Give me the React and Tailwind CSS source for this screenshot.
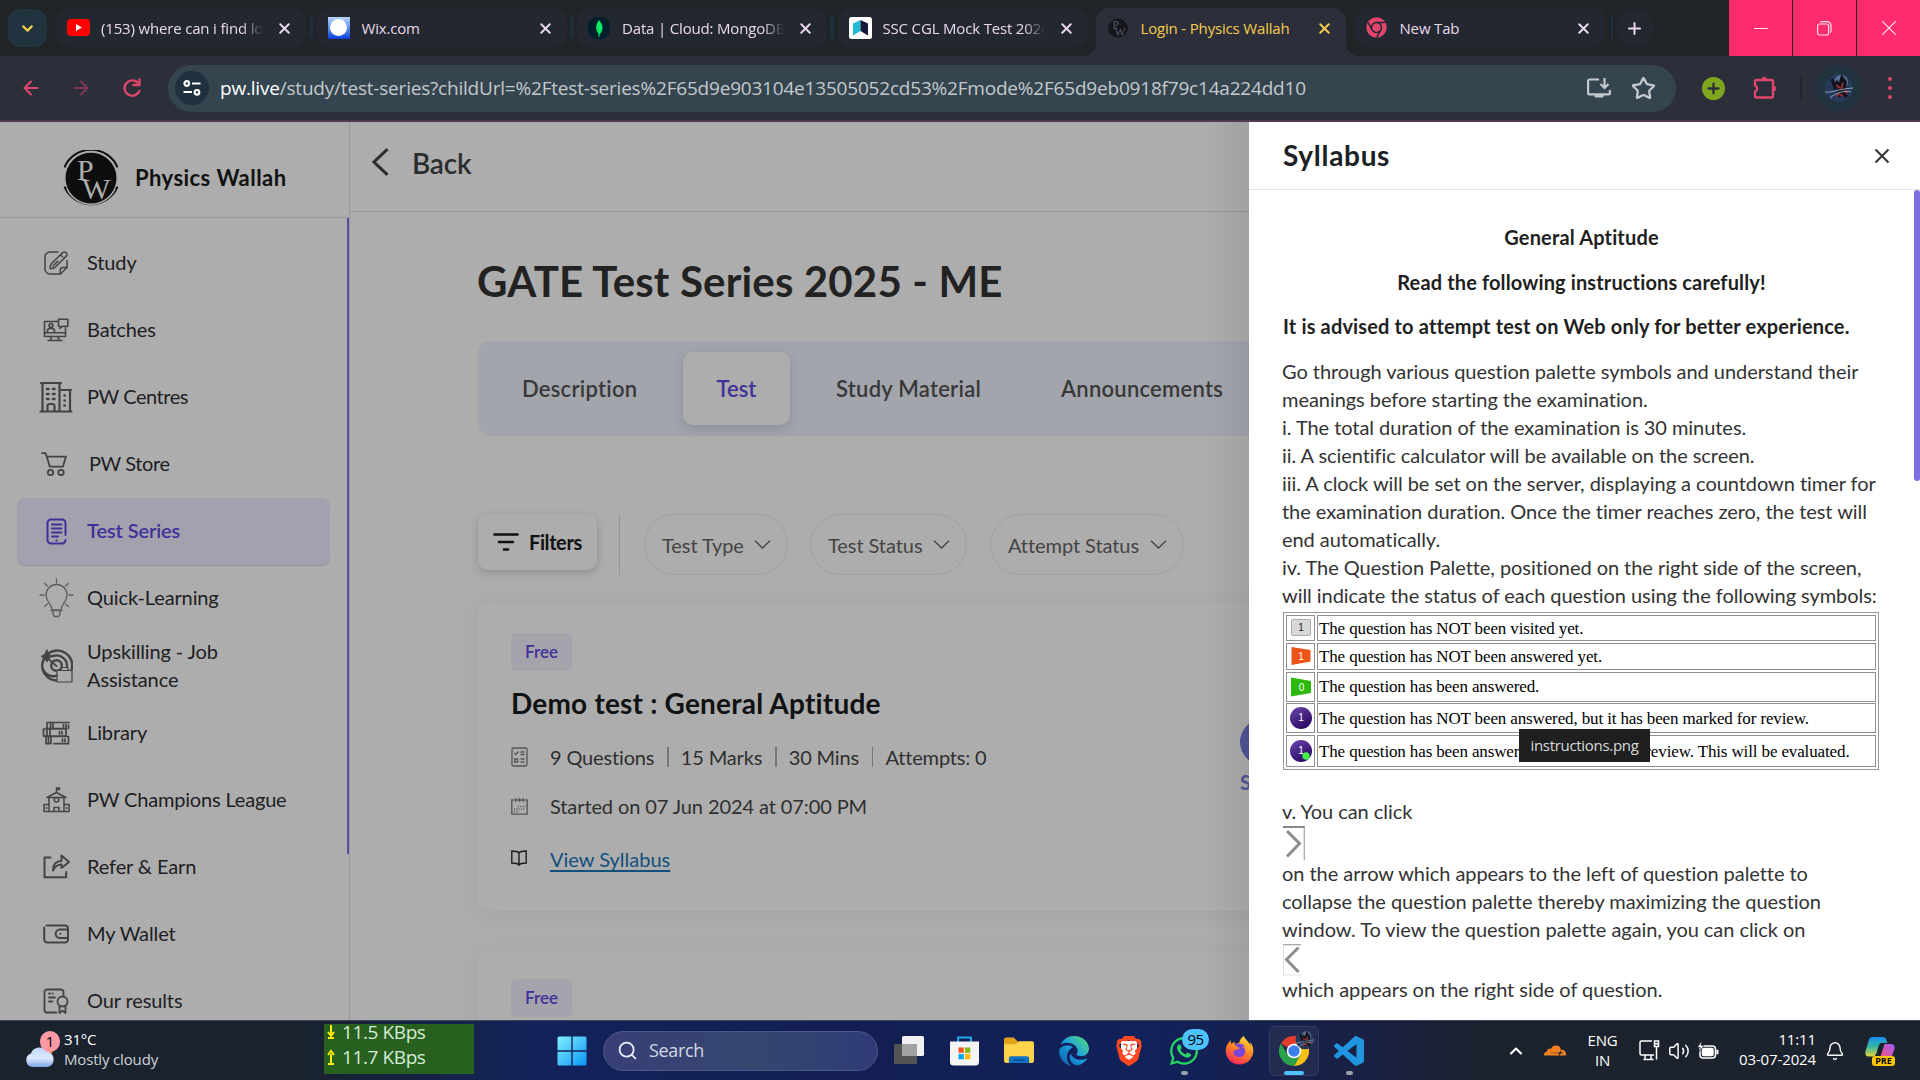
import React from 'react';
import { X, Plus, Search, Star, ArrowLeft, ArrowRight, Volume2, Bell, ChevronUp, ChevronDown } from 'lucide-react';
import { FaWhatsapp, FaFirefoxBrowser } from 'react-icons/fa';
import { FaCloudflare, FaEdge } from 'react-icons/fa6';
import { BiLogoVisualStudio } from 'react-icons/bi';
import { SiBrave } from 'react-icons/si';

/* ---------- Browser chrome ---------- */

function PwMark({ size, fg, bg }) {
  return (
    <svg width={size} height={size} viewBox="0 0 56 56" className="shrink-0">
      <circle cx="28" cy="28" r="25.5" fill={fg} />
      <path d="M1.5 17A28.5 28.5 0 0 1 54.5 17M1.5 37a28.5 28.5 0 0 0 53 0" transform="translate(0 0.8) scale(1 .97)" fill="none" stroke={fg} strokeWidth="2" />
      <path d="M4 17A26.5 26.5 0 0 1 52 17M4 39a26.5 26.5 0 0 0 48 0" fill="none" stroke={bg} strokeWidth="1.3" />
      <text x="14" y="30" fontSize="30" fill={bg} fontFamily="Liberation Serif, serif">P</text>
      <text x="19" y="49" fontSize="30" fill={bg} fontFamily="Liberation Serif, serif">W</text>
    </svg>
  );
}

const Favicons = {
  youtube: (
    <svg width="23" height="17" viewBox="0 0 23 17"><rect width="23" height="17" rx="4" fill="#f00" /><path d="M9 5l6 3.5L9 12z" fill="#fff" /></svg>
  ),
  wix: (
    <span className="flex h-[22px] w-[22px] items-center justify-center bg-linear-to-b from-[#b9d4fb] to-[#1139dc]"><span className="h-[17px] w-[17px] rounded-full bg-white" /></span>
  ),
  mongo: (
    <svg width="22" height="22" viewBox="0 0 22 22"><rect width="22" height="22" rx="9" fill="#041e2b" /><path d="M11 3c3 4 4 6 3.400 9-.5 3-2 4.500-3 5.500-1-1-2.500-2.500-3-5.500C7.800 9 8.500 7 11 3z" fill="#00ed64" /><path d="M11 14v6" stroke="#00ed64" strokeWidth="1" /></svg>
  ),
  ssc: (
    <svg width="23" height="22" viewBox="0 0 23 22"><rect width="23" height="22" rx="2.500" fill="#fff" /><path d="M4 6.500L11.500 3v11L4 18.500z" fill="#22bcd4" /><path d="M11.500 3L19 6.500v12L11.500 14z" fill="#15193a" /></svg>
  ),
  pw: <PwMark size={22} fg="#14161a" bg="#555b66" />,
  chrome: (
    <svg width="21" height="21" viewBox="0 0 21 21"><circle cx="10.500" cy="10.500" r="10.200" fill="#e0466c" /><circle cx="10.500" cy="10.500" r="5" fill="none" stroke="#23272f" strokeWidth="1.500" /><path d="M10.500 5.500H19M6.200 13L2 5.500M14.800 13l-4.300 7.500" stroke="#23272f" strokeWidth="1.500" /></svg>
  ),
};

function Tab({ icon, title, active, fade }) {
  return (
    <div className={active
      ? 'relative mt-2 flex h-12 w-[250px] items-start rounded-t-[14px] bg-[#2c2f3a] pl-[11px]'
      : 'relative mt-2 flex h-[39px] w-[250px] items-start rounded-[13px] bg-[#23272f] pl-[11px]'}>
      {active && <span className="absolute -left-3 bottom-0 h-3 w-3 bg-[radial-gradient(circle_at_0_0,transparent_11.500px,#2c2f3a_12px)]" />}
      {active && <span className="absolute -right-3 bottom-0 h-3 w-3 bg-[radial-gradient(circle_at_100%_0,transparent_11.500px,#2c2f3a_12px)]" />}
      <span className="flex h-[39px] w-[23px] shrink-0 items-center">{Favicons[icon]}</span>
      <span className={`ml-[11px] w-[162px] overflow-hidden text-[15px] leading-[41px] whitespace-nowrap tracking-[-0.17px] ${active ? 'text-[#f4cd4d]' : 'text-[#e9d8ee]'} ${fade ? '[mask-image:linear-gradient(90deg,#000_87%,transparent_100%)]' : ''}`}>
        {title}
      </span>
      <X size={17} strokeWidth={2.800} className={`mt-[12px] ml-[13px] ${active ? 'text-[#f4cd4d]' : 'text-[#e9d8ee]'}`} />
    </div>
  );
}

function Separator() {
  return <span className="flex w-[10.5px] justify-center"><span className="mt-4 h-[23px] w-1 rounded-full bg-[#1e2f3b]" /></span>;
}

function TabStrip() {
  return (
    <div className="flex h-14 bg-[#202427]">
      <div className="mt-[9px] ml-2 flex h-[38px] w-[39px] items-center justify-center rounded-[12px] bg-[#20333e] text-[#f4cd4d]">
        <ChevronDown size={17} strokeWidth={3} />
      </div>
      <div className="ml-[9px] flex">
        <Tab icon="youtube" title="(153) where can i find logos" fade />
        <Separator />
        <Tab icon="wix" title="Wix.com" />
        <Separator />
        <Tab icon="mongo" title="Data | Cloud: MongoDB Cloud" fade />
        <Separator />
        <Tab icon="ssc" title="SSC CGL Mock Test 2024 - 25" fade />
        <span className="w-[8px]" />
        <Tab icon="pw" title="Login - Physics Wallah" active />
        <span className="w-[9px]" />
        <Tab icon="chrome" title="New Tab" />
      </div>
      <span className="mt-4 ml-[6px] block h-[23px] w-[2px] rounded-full bg-[#1e2f3b]" />
      <div className="mt-[9px] ml-[3px] flex h-[38px] w-[38px] items-center justify-center rounded-full bg-[#23272f] text-[#e9d8ee]">
        <Plus size={19} strokeWidth={2.500} />
      </div>
      <div className="ml-auto flex gap-px bg-[#202427] text-[#ffe3ec]">
        <span className="flex h-14 w-[63px] items-center justify-center bg-[#ff2b6d]"><span className="h-px w-[14px] bg-current" /></span>
        <span className="flex h-14 w-[63px] items-center justify-center bg-[#ff2b6d]">
          <svg width="15" height="15" viewBox="0 0 15 15" fill="none" stroke="currentColor" strokeWidth="1.200"><rect x=".6" y="3" width="11" height="11" rx="2" /><path d="M3.500 1.200A3 3 0 0 1 5 .6h5a4 4 0 0 1 4 4v5.500a3 3 0 0 1-.7 1.600" /></svg>
        </span>
        <span className="flex h-14 w-[63px] items-center justify-center bg-[#ff2b6d]">
          <svg width="14" height="14" viewBox="0 0 14 14" stroke="currentColor" strokeWidth="1.200"><path d="M0 0l14 14M14 0L0 14" /></svg>
        </span>
      </div>
    </div>
  );
}

function AvatarArt({ size }) {
  return (
    <svg width={size} height={size} viewBox="0 0 30 30">
      <circle cx="15" cy="15" r="14" fill="#27395a" />
      <circle cx="17" cy="9" r="7" fill="#6f87b0" opacity=".7" />
      <path d="M8 6l3 8 2-4 3 5M18 5l3 4-1 8-5-2zM13 18l6 2 4 4" stroke="#14131d" strokeWidth="3.500" fill="none" />
      <path d="M12 12l4 3M19 10l-2 6M12 24l3-3 4 2M21 17l2 4" stroke="#9e2c33" strokeWidth="1.600" />
      <path d="M1 19c7 1 13-3 28-4M6 25c5-5 15-8 21-6" stroke="#a9bcd6" strokeWidth=".8" fill="none" />
    </svg>
  );
}

function Toolbar() {
  return (
    <div className="flex h-[66px] items-center border-b-2 border-[#4d3a4b] bg-[#2c2f3a]">
      <div className="flex items-center text-[#e0466c]">
        <ArrowLeft size={22} strokeWidth={2.200} className="ml-[20px]" />
        <ArrowRight size={22} strokeWidth={2.200} className="ml-[28px] text-[#7c3850]" />
        <svg width="20" height="22" viewBox="0 0 20 22" fill="none" stroke="currentColor" strokeWidth="2.300" className="ml-[30px]"><path d="M16.500 6.500A7.700 7.700 0 1 0 17.700 13" /><path d="M17.500 1.500v6.500h-7" /></svg>
      </div>
      <div className="ml-[26px] flex h-[47px] w-[1508px] items-center rounded-full bg-[#35454f] text-[#c3c9cc]">
        <span className="ml-[7px] flex h-[34px] w-[34px] items-center justify-center rounded-full bg-[#20303c] text-white">
          <svg width="18" height="16" viewBox="0 0 18 16" fill="none" stroke="currentColor" strokeWidth="2.200"><circle cx="3.800" cy="3.500" r="2.300" /><path d="M9 3.500h8.500M0.500 12h8.500" /><circle cx="14" cy="12.300" r="2.300" /></svg>
        </span>
        <span className="ml-[11px] text-[19px] whitespace-nowrap tracking-[-0.2px]">
          <span className="text-white">pw.live</span>/study/test-series?childUrl=%2Ftest-series%2F65d9e903104e13505052cd53%2Fmode%2F65d9eb0918f79c14a224dd10
        </span>
        <svg width="24" height="21" viewBox="0 0 24 21" fill="none" stroke="currentColor" strokeWidth="2.200" className="ml-auto"><path d="M12 1.500H2.500a1.400 1.400 0 0 0-1.400 1.400V15a1.400 1.400 0 0 0 1.400 1.400h19A1.400 1.400 0 0 0 22.900 15v-3" /><path d="M17.500 0v9M13.500 6l4 4 4-4" /><path d="M8 19h8v-2H8z" fill="currentColor" strokeWidth="1" /></svg>
        <Star size={25} strokeWidth={2.200} className="mr-[20px] ml-[20px]" />
      </div>
      <span className="ml-[26px] flex h-[23px] w-[23px] items-center justify-center rounded-full bg-[#7fa61f] text-[#2c2f3a]"><Plus size={17} strokeWidth={3.200} /></span>
      <svg width="25" height="24" viewBox="0 0 25 24" fill="none" stroke="#e0466c" strokeWidth="2.300" strokeLinejoin="round" className="ml-[28px]"><path d="M3.500 4h15a1.500 1.500 0 0 1 1.500 1.500V20a1.500 1.500 0 0 1-1.500 1.500H3.500A1.500 1.500 0 0 1 2 20v-4.500a3.200 3.200 0 0 0 0-6V5.500A1.500 1.500 0 0 1 3.500 4z" /><path d="M9 3.500a2.300 2.300 0 0 1 4.600 0zM20.500 10.200a2.300 2.300 0 0 1 0 4.600z" fill="#e0466c" strokeWidth="1" /></svg>
      <span className="ml-[22px] h-[22px] w-[2px] bg-[#23252f]" />
      <span className="ml-[14px] flex h-[46px] w-[46px] items-center justify-center rounded-full bg-[#20333e]"><AvatarArt size={30} /></span>
      <span className="ml-[26px] flex flex-col gap-[5px]">
        {[0, 1, 2].map((i) => <span key={i} className="h-[4px] w-[4px] rounded-full bg-[#e0466c]" />)}
      </span>
    </div>
  );
}

/* ---------- Sidebar ---------- */

const line = { fill: 'none', stroke: 'currentColor', strokeWidth: 1.500, strokeLinecap: 'round', strokeLinejoin: 'round' };

const NavIcons = {
  study: (
    <svg width="24" height="24" viewBox="0 0 24 24" {...line}><path d="M14 1H6a5 5 0 0 0-5 5v12a5 5 0 0 0 5 5h10.500L23 16.500V9.500" /><path d="M6.300 17.800c-.4-2.500 0-4 1.500-5.600L18.700 1.600c2.500-1.700 5.400.9 3.600 3.500L11.600 15.800c-1.500 1.500-2.700 2-5.300 2zM16.500 3.800l2 2M9 15l5-5M16.300 23v-4a2.500 2.500 0 0 1 2.500-2.500H23" /></svg>
  ),
  batches: (
    <svg width="26" height="24" viewBox="0 0 26 24" {...line} strokeWidth="1.600"><path d="M15 3.500H1.500v15h21V9" /><path d="M15.500 1.300h9.300v7h-5.500L17 10.500V8.300h-1.500zM1.500 14.700h21M8.500 18.500l-1 3.500M15 18.500l1 3.500M5 22.500h14" /><circle cx="8" cy="7.500" r="1.900" /><path d="M4.500 14v-1a2.500 2.500 0 0 1 2.500-2.500h2a2.500 2.500 0 0 1 2.500 2.500v1" /></svg>
  ),
  centres: (
    <svg width="34" height="32" viewBox="0 0 34 32" {...line} strokeWidth="2.200"><path d="M2 2h20M1.500 30.500h31M3.500 2.500V30M20.500 2.500V30M21 9h11M31 9.500V30M8.500 30v-5a2 2 0 0 1 2-2h3a2 2 0 0 1 2 2v5" /><path d="M8 8h1.500M14 8h1.500M8 13h1.500M14 13h1.500M8 18h1.500M14 18h1.500M25.500 14.500h.3M25.500 19.500h.3M25.500 24.500h.3" strokeWidth="2.600" /></svg>
  ),
  store: (
    <svg width="26" height="25" viewBox="0 0 26 25" {...line} strokeWidth="1.800" className="-ml-[5px]"><path d="M1 1.200h3.500l1.300 3.500 3 10h13l3.200-10H6" /><circle cx="9.500" cy="20.500" r="2.700" /><circle cx="20" cy="20.500" r="2.700" /></svg>
  ),
  test: (
    <svg width="21" height="27" viewBox="0 0 21 27" {...line} strokeWidth="2"><path d="M19.500 17V5a3.500 3.500 0 0 0-3.500-3.500H5A3.500 3.500 0 0 0 1.500 5v17A3.500 3.500 0 0 0 5 25.500h11a3.500 3.500 0 0 0 3.500-3.500" /><path d="M6 6.500h9.500M6 10.500h9.500M6 14.500h9.500M6 18.500h6M10.300 22.500h.4" /></svg>
  ),
  bulb: (
    <svg width="35" height="40" viewBox="0 0 35 40" {...line} strokeWidth="1.300" opacity=".75"><path d="M13 32c0-6-6-8-6-15a10.500 10.500 0 0 1 21 0c0 7-6 9-6 15zM14 32v4.500l1.500 2h4l1.500-2V32M12 32.500h11M17.500 1v4M1 17h4M30 17h4M5.500 5.500l3 2.500M29.500 5.500l-3 2.500M5.500 28.500l3-2.500M29.500 28.500l-3-2.500" /></svg>
  ),
  target: (
    <svg width="33" height="34" viewBox="0 0 33 34" {...line} strokeWidth="2.400"><path d="M31.500 21A15 15 0 1 0 17 31.500M9 6.500a10.500 10.500 0 0 0 8 20M27 17A10.500 10.500 0 0 0 13 7" /><circle cx="16.500" cy="16.500" r="5.300" /><path d="M5 7l11.500 10" strokeWidth="1.800" /><path d="M7 1l2 4.500 4 2-4 1.500-2 4-2.500-4L1 7.500l3.500-2z" fill="currentColor" strokeWidth="1" /><path d="M17 21.500h15v11.500H17z" fill="#adadad" strokeWidth="1.200" /><path d="M21 21v-2.500h7V21" strokeWidth="1.200" /></svg>
  ),
  library: (
    <svg width="28" height="24" viewBox="0 0 28 24" {...line} strokeWidth="1.700"><path d="M27 1.500H5v6.200h19.500M1.500 8h22.500v7.200H1.500zM4 15.500h22.500v7.200H12M4 15.500v7.200h5M8.500 1.500v6M11 1.500v6M5 8.500v6M8 8.500v6M6.500 16v6M9 16v6M21.500 3.500v2.500M24 3.500v2.500M26.500 4v3.500M17.500 10.500v2.500M20 10.500v2.500M20.500 18v2.500M23 18v2.500" /></svg>
  ),
  school: (
    <svg width="27" height="26" viewBox="0 0 27 26" {...line} strokeWidth="1.500"><path d="M1 24.500h25V17.500h-5M1 24.500V17.500h5M6 24.500V10.500h15v14M4 10.500l9.500-5 9.500 5M13.500 5V1h3v1.500h-3M11 24.500v-4h5v4" /><circle cx="13.500" cy="12.800" r="2.300" /><path d="M3.500 20.500v1M23.500 20.500v1" /></svg>
  ),
  refer: (
    <svg width="27" height="25" viewBox="0 0 27 25" {...line} strokeWidth="2"><path d="M7.500 3.500H1.500v19.700h21.700V18" /><path d="M10 16.500c0-6.500 3-9.500 8.500-9.500V1.500L26 8l-7.500 6V10.500c-3.500 0-6.500 2-8.500 6z" /></svg>
  ),
  wallet: (
    <svg width="26" height="20" viewBox="0 0 26 20" {...line} strokeWidth="2"><path d="M3.500 1.500h18.300A3 3 0 0 1 25 4.500v11a3 3 0 0 1-3.200 3H4.500a3.300 3.300 0 0 1-3.300-3V3.500" /><path d="M25 5.500h-8a4.300 4.300 0 0 0 0 8.600h8" /><path d="M17.300 9.800h.1" /></svg>
  ),
  results: (
    <svg width="26" height="26" viewBox="0 0 26 26" {...line} strokeWidth="1.800"><path d="M20.500 7V4a2.500 2.500 0 0 0-2.500-2.500H4A2.500 2.500 0 0 0 1.500 4v18A2.500 2.500 0 0 0 4 24.500h9.500M6 5.500h1M9.500 5.500h.3M6 9.500h6M6 13.500h3.500" /><circle cx="19.500" cy="13.500" r="5" /><path d="M16.500 18v7l3-2.200 3 2.200v-7" /></svg>
  ),
};

const NAV = [
  { icon: 'study', label: 'Study' },
  { icon: 'batches', label: 'Batches' },
  { icon: 'centres', label: 'PW Centres', spacing: 'tracking-[-0.45px]' },
  { icon: 'store', label: 'PW Store', spacing: 'tracking-[-0.4px] pl-[2px]' },
  { icon: 'test', label: 'Test Series', active: true, spacing: 'tracking-[-0.1px]' },
  { icon: 'bulb', label: 'Quick-Learning' },
  { icon: 'target', label: 'Upskilling - Job Assistance' },
  { icon: 'library', label: 'Library' },
  { icon: 'school', label: 'PW Champions League', spacing: 'tracking-[-0.18px]' },
  { icon: 'refer', label: 'Refer & Earn' },
  { icon: 'wallet', label: 'My Wallet' },
  { icon: 'results', label: 'Our results' },
];

function Sidebar() {
  return (
    <aside className="flex w-[350px] shrink-0 flex-col border-r border-[#999]">
      <div className="flex h-[96px] shrink-0 items-center border-b border-[#999] pt-[17px] pl-[63px]">
        <PwMark size={56} fg="#0e0e0e" bg="#adadad" />
        <span className="ml-[16px] pb-[2px] text-[22px] font-bold tracking-[0.45px] text-[#111]">Physics Wallah</span>
      </div>
      <div className="flex min-h-0 flex-1 justify-between">
        <nav className="w-[330px] pt-[11px] pl-[17px]">
          {NAV.map((n) => (
            <div key={n.icon} className={`flex h-[67.170px] items-center rounded-[8px] text-[20px] leading-7 ${n.active ? 'bg-[#a3a1ad] font-semibold text-[#40309a] shadow-[0_1px_0_#9795a6]' : 'text-[#1d2023]'}`}>
              <span className={`flex w-[78px] shrink-0 justify-center ${n.active ? '' : 'text-[#444]'}`}>{NavIcons[n.icon]}</span>
              <span className={`-ml-[8px] w-[210px] pb-[2px] ${n.icon === 'target' ? 'pr-[70px]' : 'whitespace-nowrap'} ${n.spacing || 'tracking-[-0.12px]'}`}>{n.label}</span>
            </div>
          ))}
        </nav>
        <span className="h-[636px] w-[2px] bg-[#564da3]" />
      </div>
    </aside>
  );
}

/* ---------- Main content ---------- */

function FilterPill({ label, className }) {
  return (
    <span className={`flex h-[61px] shrink-0 items-center justify-between rounded-full border border-[#a0a0a0] pr-[16px] pl-[17px] text-[20px] tracking-[-0.070px] whitespace-nowrap text-[#444] ${className}`}>
      {label}
      <svg width="17" height="9" viewBox="0 0 17 9" fill="none" stroke="currentColor" strokeWidth="1.300" className="shrink-0"><path d="M1 .8l7.500 7.200L16 .8" /></svg>
    </span>
  );
}

function Free() {
  return <span className="flex h-[38px] w-[61px] items-center justify-center rounded-[5px] bg-[#a5a4ad] text-[17px] font-semibold text-[#40309a]">Free</span>;
}

function Main() {
  const tabs = 'text-[22px] font-semibold text-[#383838] tracking-[0.25px]';
  const bar = <span className="mr-[12px] ml-[13px] h-[20px] w-[1.500px] bg-[#777]" />;
  return (
    <main className="relative w-[899px] shrink-0 overflow-hidden">
      <div className="flex h-[90px] items-center border-b border-[#999] pb-[8px] pl-[22px] text-[#2b2d2f]">
        <svg width="17" height="28" viewBox="0 0 17 28" fill="none" stroke="currentColor" strokeWidth="3" className="-mt-px"><path d="M15.500 1.200L2 14l13.500 12.800" /></svg>
        <span className="ml-[23px] text-[28px] font-semibold tracking-[-0.200px]">Back</span>
      </div>
      <div className="pl-[128px]">
        <h1 className="mt-[44px] -ml-px text-[42px] leading-[50px] font-bold whitespace-nowrap tracking-[0.150px] text-[#222]">GATE Test Series 2025 - ME</h1>
        <div className="mt-[35px] flex h-[95px] w-[900px] items-center rounded-l-[12px] bg-[#a3a5ad]">
          <span className={`ml-[44px] w-[116px] whitespace-nowrap ${tabs}`}>Description</span>
          <span className="ml-[45px] flex h-[73px] w-[107px] items-center justify-center rounded-[10px] bg-[#adadad] text-[22px] font-semibold text-[#40309a] shadow-[0_4px_12px_rgba(70,80,100,0.25)]">Test</span>
          <span className={`ml-[46px] w-[147px] whitespace-nowrap ${tabs}`}>Study Material</span>
          <span className={`ml-[78px] whitespace-nowrap ${tabs}`}>Announcements</span>
        </div>
        <div className="mt-[78px] flex w-[900px] items-start">
          <span className="flex h-[56px] w-[119px] items-center rounded-[10px] pl-[15px] text-[#111] shadow-[0_3px_9px_rgba(0,0,0,0.18)]">
            <svg width="26" height="18" viewBox="0 0 26 18" stroke="currentColor" strokeWidth="2.600" strokeLinecap="round"><path d="M1.500 1.500h23M6 9h14M11 16.500h4" /></svg>
            <span className="ml-[10px] pb-px text-[20px] font-bold tracking-[-0.400px]">Filters</span>
          </span>
          <span className="ml-[22px] h-[61px] w-px bg-[#979797]" />
          <FilterPill label="Test Type" className="ml-[24px] w-[144px]" />
          <FilterPill label="Test Status" className="ml-[22px] w-[157px]" />
          <FilterPill label="Attempt Status" className="ml-[23px] w-[194px]" />
        </div>

        <section className="relative mt-[28px] h-[308px] w-[900px] rounded-l-[10px] pt-[30px] pl-[33px] shadow-[0_4px_24px_rgba(0,0,0,0.06)]">
          <Free />
          <h2 className="mt-[16px] text-[28px] leading-[33px] font-bold tracking-[0.200px] text-[#101113]">Demo test : General Aptitude</h2>
          <div className="mt-[23px] flex h-7 items-center text-[20px] tracking-[-0.160px] text-[#2f2f2f]">
            <span className="w-[39px] text-[#555]">
              <svg width="17" height="20" viewBox="0 0 17 20" fill="none" stroke="currentColor" strokeWidth="1.300"><rect x="1" y="1" width="15" height="18" rx="1.500" /><path d="M3.500 6l1.300 1.500L7.500 4.500M9.500 5h4M9.500 7.500h4M3.700 12h3v3h-3zM9.500 12h4M9.500 15h4" /></svg>
            </span>
            9 Questions{bar}15 Marks{bar}30 Mins{bar}Attempts: 0
          </div>
          <div className="mt-[21px] flex h-7 items-center text-[20px] tracking-[-0.100px] text-[#2f2f2f]">
            <span className="w-[39px] text-[#555]">
              <svg width="17" height="17" viewBox="0 0 17 17" fill="none" stroke="currentColor" strokeWidth="1.300"><path d="M3 2H.8v14.200h15.400V2H14M5 2h7M4.500 0v4M8.500 0v4M12.500 0v4" /><path d="M7 8.500h7.500M3 11h11.500M3 13.500h5" strokeDasharray="1 1.300" /></svg>
            </span>
            Started on 07 Jun 2024 at 07:00 PM
          </div>
          <div className="mt-[25px] flex h-7 items-center text-[20px]">
            <span className="w-[39px] pb-[2px] text-[#1d1d1d]">
              <svg width="16" height="16" viewBox="0 0 16 16" fill="none" stroke="currentColor" strokeWidth="1.400"><path d="M8 3C7 1.500 4 1 .8 1v12C4 13 7 13.500 8 15c1-1.500 4-2 7.200-2V1C12 1 9 1.500 8 3zM8 3v12" /></svg>
            </span>
            <span className="text-[#114f7d] underline underline-offset-[3px]">View Syllabus</span>
          </div>
          {/* Start button, tucked under the drawer's edge */}
          <div className="absolute top-[116px] left-[762px] w-12 text-[20px] font-bold text-[#4f5596]">
            <span className="block h-[46px] w-[46px] rounded-full bg-[#4f5596]" />
            <span className="mt-[3px] block leading-7">Start</span>
          </div>
        </section>

        <section className="mt-[39px] h-[308px] w-[900px] rounded-l-[10px] pt-[29px] pl-[33px] shadow-[0_4px_24px_rgba(0,0,0,0.06)]">
          <Free />
        </section>
      </div>
      <span className="absolute top-0 right-0 h-full w-[44px] bg-linear-to-r from-transparent to-black/7" />
    </main>
  );
}

/* ---------- Syllabus drawer ---------- */

const ROWS = [
  { h: 'h-[26px]', text: 'The question has NOT been visited yet.', mark: 'unseen' },
  { h: 'h-[27px]', text: 'The question has NOT been answered yet.', mark: 'skipped' },
  { h: 'h-[30px]', text: 'The question has been answered.', mark: 'done' },
  { h: 'h-[30px]', text: 'The question has NOT been answered, but it has been marked for review.', mark: 'review' },
  { h: 'h-[32px]', text: 'The question has been answered and marked for review. This will be evaluated.', mark: 'reviewDone' },
];

function Mark({ kind }) {
  const num = { fontSize: 10, fontFamily: 'Liberation Sans, sans-serif', textAnchor: 'middle' };
  if (kind === 'unseen') return <svg width="22" height="20" viewBox="0 0 22 20"><rect x="1.500" y="1.500" width="19" height="16" rx="1.500" fill="#d9d9d9" stroke="#a9a9a9" /><text x="11" y="13" fill="#222" {...num}>1</text></svg>;
  if (kind === 'skipped') return <svg width="22" height="20" viewBox="0 0 22 20"><path d="M1.500 1l19 3v11.500l-19 3.500z" fill="#ee5418" /><text x="11" y="13.500" fill="#fff" {...num}>1</text></svg>;
  if (kind === 'done') return <svg width="22" height="20" viewBox="0 0 22 20"><path d="M1 .5l20 3.500v12L1 19.500z" fill="#2cb90b" /><text x="11.500" y="13.500" fill="#fff" {...num}>0</text></svg>;
  return (
    <svg width="24" height="24" viewBox="0 0 24 24">
      <defs><linearGradient id="orb" x2=".6" y2="1"><stop stopColor="#6a48ab" /><stop offset="1" stopColor="#2d0a66" /></linearGradient></defs>
      <circle cx="12" cy="12" r="11" fill="url(#orb)" />
      <text x="12" y="15.200" fill="#fff" {...num}>1</text>
      {kind === 'reviewDone' && <circle cx="17" cy="17" r="3.700" fill="#43f04b" />}
    </svg>
  );
}

function PaletteTable() {
  return (
    <div className="relative mt-[3px] ml-px flex h-[158px] w-[596px] flex-col justify-between border border-[#979797] px-[2px] pt-[2px] pb-[2px]">
      {ROWS.map((r) => (
        <div key={r.mark} className={`flex gap-[2px] ${r.h}`}>
          <span className="flex w-[29px] items-center justify-center border border-[#8f8f8f]"><Mark kind={r.mark} /></span>
          <span className="flex flex-1 items-center overflow-hidden border border-[#8f8f8f] pt-px pl-px font-['Liberation_Serif',serif] text-[17px] whitespace-nowrap tracking-[-0.130px] text-black">{r.text}</span>
        </div>
      ))}
      <span className="absolute top-[116px] left-[235px] flex h-[33px] w-[131px] items-center justify-center bg-[#1f1f1f] pb-[2px] font-['Open_Sans',sans-serif] text-[15px] tracking-[-0.300px] text-[#dadada]">instructions.png</span>
    </div>
  );
}

function Lines({ items }) {
  return items.map((t) => <span key={t} className="block whitespace-nowrap">{t}</span>);
}

function Drawer() {
  return (
    <section className="flex w-[671px] shrink-0 flex-col bg-white">
      <header className="flex h-[68px] shrink-0 items-center justify-between border-b border-[#e4e4e4] pr-[28px] pl-[34px]">
        <h2 className="pb-px text-[28px] font-bold tracking-[0.700px] text-[#1b2124]">Syllabus</h2>
        <svg width="20" height="20" viewBox="0 0 20 20" stroke="#333" strokeWidth="2"><path d="M3.500 3.500l13 13M16.500 3.500l-13 13" /></svg>
      </header>
      <div className="flex flex-1 justify-between">
        <div className="w-[632px] pt-[33px] pl-[33px] text-[20px] leading-7 tracking-[-0.055px] text-[#333]">
          <p className="text-center font-bold tracking-[0.150px] text-[#1f1f1f]">General Aptitude</p>
          <p className="mt-[17px] text-center font-bold tracking-[0.130px] text-[#1f1f1f]">Read the following instructions carefully!</p>
          <p className="mt-[16px] pl-px font-bold tracking-[0.150px] text-[#1f1f1f]">It is advised to attempt test on Web only for better experience.</p>
          <p className="mt-[17px]">
            <Lines items={[
              'Go through various question palette symbols and understand their',
              'meanings before starting the examination.',
              'i. The total duration of the examination is 30 minutes.',
              'ii. A scientific calculator will be available on the screen.',
              'iii. A clock will be set on the server, displaying a countdown timer for',
              'the examination duration. Once the timer reaches zero, the test will',
              'end automatically.',
              'iv. The Question Palette, positioned on the right side of the screen,',
              'will indicate the status of each question using the following symbols:',
            ]} />
          </p>
          <PaletteTable />
          <p className="mt-[27px]">v. You can click</p>
          <svg width="22" height="34" viewBox="0 0 22 34" fill="none" className="mt-px ml-px block"><path d="M0 1h22" stroke="#888" strokeWidth="2" /><path d="M21.300 1v33" stroke="#aaa" strokeWidth="1.300" /><path d="M4 5l12.500 12.500L4 30.500" stroke="#8d8d8d" strokeWidth="3" /></svg>
          <p className="-mt-px">
            <Lines items={[
              'on the arrow which appears to the left of question palette to',
              'collapse the question palette thereby maximizing the question',
              'window. To view the question palette again, you can click on',
            ]} />
          </p>
          <svg width="18" height="32" viewBox="0 0 18 32" fill="none" className="mt-px ml-px block"><path d="M0 .7h18" stroke="#aaa" strokeWidth="1.300" /><path d="M0 31h18M.5 1v30" stroke="#e2e2e2" /><path d="M15.500 3.500L3.500 15.500 15.500 28" stroke="#8d8d8d" strokeWidth="3" /></svg>
          <p className="-mt-px">which appears on the right side of question.</p>
        </div>
        <span className="h-[291px] w-[6px] rounded-[3px] bg-[#7a6ee0]" />
      </div>
    </section>
  );
}

/* ---------- Taskbar ---------- */

function TaskIcon({ children, gap, dot }) {
  return (
    <span className={`relative flex h-[60px] w-[30px] items-center justify-center ${gap}`}>
      {children}
      {dot && <span className="absolute bottom-[6px] h-[4px] w-[7px] rounded-full bg-[#9aa0aa]" />}
    </span>
  );
}

const SPEEDS = [
  { text: '11.5 KBps', arrow: 'M4 1v10M1 8l3 4 3-4M1 14h6', h: 'h-[16px]' },
  { text: '11.7 KBps', arrow: 'M4 15V5M1 6l3-4 3 4M1 15h6', h: 'h-[37px]' },
];

function Taskbar() {
  return (
    <footer className="flex h-[60px] items-center border-t border-[#3d4759] bg-[linear-gradient(90deg,#1a222d_0%,#19222f_16%,#12225a_28%,#131f52_44%,#11215a_60%,#1a2040_72%,#1c222c_78%,#1b232e_100%)]">
      <div className="relative -mt-[3px] ml-[24px] h-[37px] w-[36px]">
        <svg width="32" height="26" viewBox="0 0 32 26" className="absolute bottom-0 left-0">
          <defs><linearGradient id="cl" x2="0" y2="1"><stop stopColor="#bcd5fb" /><stop offset=".55" stopColor="#dbe9fd" /><stop offset="1" stopColor="#7ea6e8" /></linearGradient></defs>
          <circle cx="24" cy="8" r="5" fill="#f07a1c" />
          <path d="M8 25a7 7 0 0 1-1-13.500A9 9 0 0 1 23 9.500a8 8 0 0 1 1 15.500z" fill="url(#cl)" />
        </svg>
        <span className="absolute top-0 right-0 flex h-[21px] w-[20px] items-center justify-center rounded-full bg-[#ff9aa4] text-[15px] text-black">1</span>
      </div>
      <div className="-mt-[4px] ml-[4px] text-[15px] leading-5 tracking-[-0.160px]">
        <div className="text-white">31°C</div>
        <div className="text-[#d0d3d6]">Mostly cloudy</div>
      </div>
      <div className="-mt-[3px] ml-[166px] flex h-[50px] w-[150px] flex-col bg-[#27601f] pl-[3px] text-[19px] leading-[27px] tracking-[-0.400px] text-[#d7ecd6]">
        {SPEEDS.map((s) => (
          <span key={s.text} className={`flex items-center ${s.h}`}>
            <svg width="8" height="16" viewBox="0 0 8 16" fill="none" stroke="#ffee00" strokeWidth="2"><path d={s.arrow} /></svg>
            <span className="ml-[7px]">{s.text}</span>
          </span>
        ))}
      </div>
      <TaskIcon gap="ml-[83px]">
        <svg width="30" height="30" viewBox="0 0 30 30"><defs><linearGradient id="wn" x2="1" y2="1"><stop stopColor="#83f1ff" /><stop offset="1" stopColor="#0a93f5" /></linearGradient></defs><path d="M.5 2a1.500 1.500 0 0 1 1.500-1.500h12.300v13.800H.5zM15.700.5H28A1.500 1.500 0 0 1 29.500 2v12.300H15.700zM.5 15.700h13.800v13.800H2A1.500 1.500 0 0 1 .5 28zM15.700 15.700h13.800V28a1.500 1.500 0 0 1-1.500 1.500H15.700z" fill="url(#wn)" /></svg>
      </TaskIcon>
      <div className="ml-[16px] flex h-[40px] w-[275px] items-center rounded-full border border-[#4a5788] bg-[linear-gradient(90deg,#383f76,#35466f_55%,#303b77)] pl-[13px] text-[18px] tracking-[-0.330px] text-[#d4d8e4]">
        <Search size={21} strokeWidth={2} className="text-[#eeeeff]" />
        <span className="ml-[11px]">Search</span>
      </div>
      <TaskIcon gap="ml-[16px]">
        <svg width="30" height="29" viewBox="0 0 30 29"><rect x="0" y="8" width="23" height="20" rx="1.500" fill="#545454" /><rect x="8" y="0" width="22" height="20" rx="1.500" fill="#f1f1f1" /><path d="M8 8h15v12H8z" fill="#a2a2a2" /></svg>
      </TaskIcon>
      <TaskIcon gap="ml-[25px]">
        <svg width="29" height="30" viewBox="0 0 29 30"><path d="M8 6V1.500h13V6" fill="none" stroke="#1ea7ea" strokeWidth="2" /><path d="M0 5.500h29V26a3.500 3.500 0 0 1-3.500 3.500h-22A3.500 3.500 0 0 1 0 26z" fill="#f4f4f4" /><path d="M8.500 11.500h5.300v5.300H8.500z" fill="#f25022" /><path d="M15 11.500h5.300v5.300H15z" fill="#7fba00" /><path d="M8.500 18h5.300v5.300H8.500z" fill="#00a4ef" /><path d="M15 18h5.300v5.300H15z" fill="#ffb900" /></svg>
      </TaskIcon>
      <TaskIcon gap="ml-[25px]">
        <svg width="31" height="28" viewBox="0 0 31 28"><path d="M0 2a2 2 0 0 1 2-2h8l4 4v6H0z" fill="#e0a416" /><path d="M0 7h12l3-3h14a2 2 0 0 1 2 2v18a2.500 2.500 0 0 1-2.500 2.500h-26A2.500 2.500 0 0 1 0 24z" fill="#ffd24b" /><path d="M5 26.500V22a2.500 2.500 0 0 1 2.500-2.500h16A2.500 2.500 0 0 1 26 22v4.500z" fill="#1272c4" /><path d="M10 23.300h11" stroke="#0b4c8c" strokeWidth="1.300" /></svg>
      </TaskIcon>
      <TaskIcon gap="ml-[25px]">
        <svg width="0" height="0" className="absolute"><defs><linearGradient id="ed" x1="0" y1="1" x2="1" y2="0"><stop stopColor="#0c59a4" /><stop offset=".5" stopColor="#1b9de2" /><stop offset="1" stopColor="#5be06f" /></linearGradient></defs></svg>
        <FaEdge size={30} className="fill-[url(#ed)]" />
      </TaskIcon>
      <TaskIcon gap="ml-[25px]">
        <span className="absolute h-[20px] w-[16px] rounded-b-[9px] bg-white" />
        <SiBrave size={30} className="relative text-[#fb4a22]" />
      </TaskIcon>
      <TaskIcon gap="ml-[25px]" dot>
        <FaWhatsapp size={32} className="shrink-0 text-[#27d366]" />
        <span className="absolute top-[8px] -right-[10px] flex h-[21px] w-[27px] items-center justify-center rounded-full bg-[#4cc2ff] text-[15px] tracking-[-0.500px] text-black">95</span>
      </TaskIcon>
      <TaskIcon gap="ml-[25px]">
        <svg width="0" height="0" className="absolute"><defs><linearGradient id="ff" x1=".8" y1="0" x2=".3" y2="1"><stop stopColor="#ffdf3a" /><stop offset=".5" stopColor="#ff8423" /><stop offset="1" stopColor="#f5245c" /></linearGradient></defs></svg>
        <span className="absolute h-[16px] w-[16px] rounded-full bg-[#7a45d6]" />
        <FaFirefoxBrowser size={29} className="relative fill-[url(#ff)]" />
      </TaskIcon>
      <span className="relative ml-[15px] flex h-[50px] w-[50px] items-center justify-center rounded-[6px] border border-[#323c62] bg-[#232c50]">
        <svg width="30" height="30" viewBox="0 0 30 30"><path d="M15 15L2 7.500A15 15 0 0 1 28 7.500H15z" fill="#e33b2e" /><path d="M28 7.500A15 15 0 0 1 15 30l6.500-11.300L15 7.500z" fill="#fbc116" /><path d="M2 7.500A15 15 0 0 0 15 30l6.500-11.300h-13z" fill="#2aa14b" /><circle cx="15" cy="15" r="7.300" fill="#fff" /><circle cx="15" cy="15" r="5.700" fill="#3b7de9" /></svg>
        <span className="absolute top-[3px] right-[3px] flex"><AvatarArt size={20} /></span>
        <span className="absolute bottom-0 h-[4px] w-[20px] rounded-full bg-[#4cc2ff]" />
      </span>
      <TaskIcon gap="ml-[15px]" dot>
        <BiLogoVisualStudio size={36} className="shrink-0 text-[#2196e0]" />
      </TaskIcon>

      <div className="ml-auto flex items-center text-white">
        <ChevronUp size={20} strokeWidth={2.500} />
        <FaCloudflare size={22} className="ml-[18px] text-[#f48120]" />
        <div className="-mt-[2px] ml-[21px] w-[31px] text-center text-[15px] leading-5 tracking-[-0.200px]">
          <div>ENG</div>
          <div>IN</div>
        </div>
        <svg width="22" height="21" viewBox="0 0 22 21" fill="none" stroke="currentColor" strokeWidth="1.500" className="ml-[21px]"><path d="M13 1H2.500A1.500 1.500 0 0 0 1 2.500v11A1.500 1.500 0 0 0 2.500 15H15M6 15v4M12 15v4M4.500 19.500h10M15.500 1h4v5.500h-4zM15.500 3.800h4M17.500 6.500v13" /></svg>
        <Volume2 size={22} strokeWidth={1.600} className="ml-[7px]" />
        <svg width="22" height="19" viewBox="0 0 22 19" fill="none" stroke="currentColor" strokeWidth="1.500" className="ml-[7px]"><rect x="3" y="5" width="15.500" height="12" rx="3" /><rect x="5.500" y="7.500" width="10.500" height="7" rx="1" fill="currentColor" /><path d="M19.500 9.500h1.200v3h-1.200" fill="currentColor" /><path d="M4.500 0L.5 6.500h3l-1 4L7 4.500H4z" fill="currentColor" stroke="#1b232e" strokeWidth=".6" /></svg>
        <div className="-mt-[4px] ml-[18px] w-[79px] text-right text-[15px] leading-5 tracking-[-0.130px]">
          <div>11:11</div>
          <div>03-07-2024</div>
        </div>
        <Bell size={20} strokeWidth={1.700} className="ml-[9px]" />
        <span className="relative mr-[25px] ml-[20px] block h-[30px] w-[30px]">
          <svg width="30" height="24" viewBox="0 0 30 24">
            <defs>
              <linearGradient id="cp1" x2="0" y2="1"><stop stopColor="#1a8cf0" /><stop offset=".5" stopColor="#35b7a0" /><stop offset="1" stopColor="#e8d23c" /></linearGradient>
              <linearGradient id="cp2" x1="1" x2="0" y2="1"><stop stopColor="#a05cf5" /><stop offset="1" stopColor="#f7567a" /></linearGradient>
            </defs>
            <path d="M7 1h11c3 0 3.500 3 4.500 6h-6c-2 0-2.500 2-3.500 5l-1.500 5c-1 2.500-2 3.500-4 3.500H3.500C0 20.500 0 17 .8 14L4 3.500C4.600 2 5.500 1 7 1z" fill="url(#cp1)" />
            <path d="M19.500 8H26c3.500 0 4 3 3.200 6l-3 8H15z" fill="url(#cp2)" />
          </svg>
          <span className="absolute bottom-0 left-[7px] flex h-[10px] w-[23px] items-center justify-center rounded-[3px] bg-[#fdc500] text-[9px] font-bold text-black">PRE</span>
        </span>
      </div>
    </footer>
  );
}

export default function App() {
  return (
    <div className="flex h-[1080px] w-[1920px] flex-col overflow-hidden bg-[#adadad] font-['Open_Sans','Noto_Sans',sans-serif]">
      <TabStrip />
      <Toolbar />
      <div className="flex h-[898px] overflow-hidden font-['Lato',sans-serif] [font-variant-ligatures:none]">
        <Sidebar />
        <Main />
        <Drawer />
      </div>
      <Taskbar />
    </div>
  );
}
